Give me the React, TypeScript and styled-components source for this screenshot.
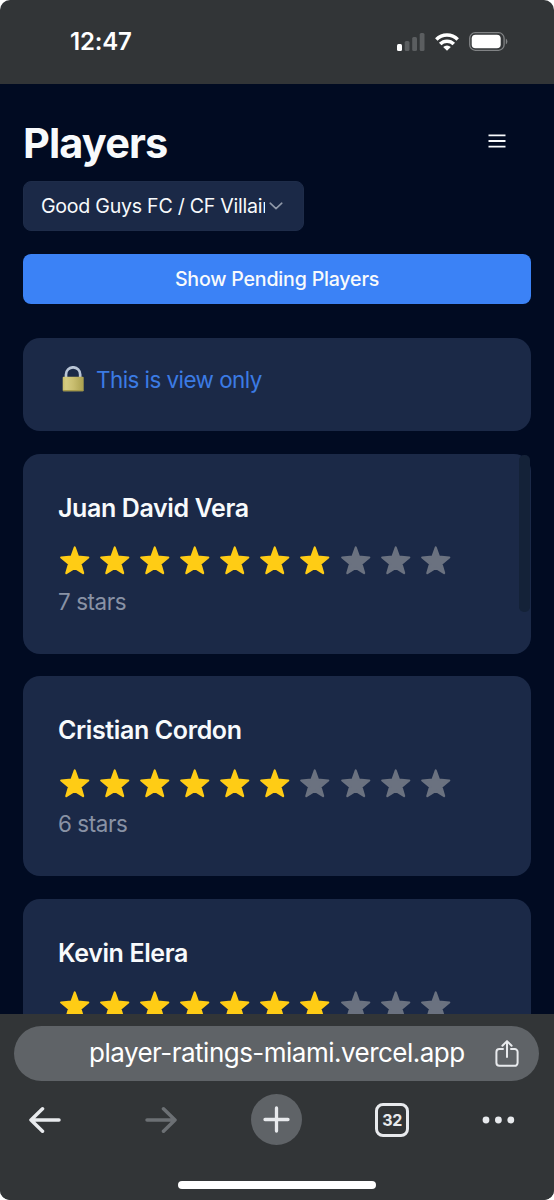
import React from "react";
import styled, { createGlobalStyle } from "styled-components";

const GlobalStyle = createGlobalStyle`
  * { box-sizing: border-box; }
  html, body { margin: 0; padding: 0; background: #fff; }
  body { font-family: Inter, "Liberation Sans", sans-serif; -webkit-font-smoothing: antialiased; }
  h1, h2, p { margin: 0; }
  button { font: inherit; border: 0; padding: 0; background: none; color: inherit; }
  svg { display: block; flex: none; }
`;

const Screen = styled.div`
  width: 554px;
  height: 1200px;
  display: flex;
  flex-direction: column;
  overflow: hidden;
  border-radius: 10px;
  background: #323537;
`;

const StatusBar = styled.header`
  height: 84px;
  flex: none;
  display: flex;
  justify-content: space-between;
  align-items: center;
  padding: 0 46px 1px 70px;
  color: #fff;
`;

const Clock = styled.span`
  font-size: 24px;
  font-weight: 600;
  line-height: 30px;
  letter-spacing: -0.2px;
`;

const StatusIcons = styled.div`
  display: flex;
  align-items: center;
  gap: 10px;
`;

const Page = styled.main`
  position: relative;
  flex: 1;
  min-height: 0;
  overflow: hidden;
  padding: 34px 23px 0;
  background: #010b22;
  color: #f8fafc;
`;

const TitleRow = styled.div`
  height: 50px;
  display: flex;
  justify-content: space-between;
  align-items: center;
`;

const Title = styled.h1`
  font-size: 41.5px;
  line-height: 50px;
  font-weight: 700;
  letter-spacing: -0.9px;
`;

const MenuButton = styled.button`
  width: 68px;
  height: 46px;
  padding-bottom: 4px;
  display: grid;
  place-items: center;
`;

const TeamSelect = styled.button`
  width: 281px;
  height: 50px;
  margin-top: 13px;
  padding: 0 20px 0 17px;
  display: flex;
  align-items: center;
  justify-content: space-between;
  border-radius: 8px;
  border: 1px solid #1e2c49;
  background: #1b2947;
  font-size: 19.6px;
  line-height: 28px;
`;

const TeamName = styled.span`
  width: 224px;
  flex: none;
  overflow: hidden;
  white-space: nowrap;
  text-align: left;
  letter-spacing: -0.26px;
`;

const PendingButton = styled.button`
  width: 100%;
  height: 50px;
  margin: 23px 0 34px;
  display: grid;
  place-items: center;
  border-radius: 8px;
  background: #3b82f6;
  font-size: 19.6px;
  font-weight: 500;
  letter-spacing: -0.2px;
`;

const CardList = styled.div`
  display: flex;
  flex-direction: column;
  gap: 22.6px;
`;

const Notice = styled.section`
  height: 93px;
  padding: 26px 38px;
  display: flex;
  align-items: flex-start;
  gap: 11px;
  border-radius: 17px;
  background: #1b2947;
  color: #3b7be4;
  font-size: 22.4px;
  line-height: 32px;
  letter-spacing: -0.53px;
`;

const PlayerCard = styled.article`
  height: 200px;
  padding: 37.3px 35px;
  border-radius: 17px;
  background: #1b2947;
`;

const PlayerName = styled.h2`
  font-size: 25px;
  line-height: 34px;
  font-weight: 600;
  letter-spacing: -0.38px;
`;

const Stars = styled.div`
  display: flex;
  gap: 8px;
  margin-top: 20.4px;
`;

const StarCount = styled.p`
  margin-top: 11.6px;
  font-size: 22.4px;
  line-height: 30px;
  letter-spacing: -0.42px;
  color: #8992a5;
`;

const Scrollbar = styled.div`
  position: absolute;
  top: 371px;
  right: 24px;
  width: 11px;
  height: 157px;
  border-radius: 5px;
  background: #142238;
`;

const BrowserBar = styled.footer`
  height: 186px;
  flex: none;
  padding: 12px 15px 0 14px;
  background: #323537;
  color: #e8eaed;
`;

const AddressBar = styled.div`
  height: 55px;
  padding: 0 20.5px 2px 75px;
  display: flex;
  align-items: center;
  justify-content: space-between;
  border-radius: 28px;
  background: #5f6367;
`;

const Address = styled.span`
  font-size: 26px;
  line-height: 36px;
  letter-spacing: -0.52px;
  white-space: nowrap;
  color: #fff;
`;

const Toolbar = styled.nav`
  height: 77px;
  display: grid;
  grid-template-columns: 61px 171px 61px 170px 42px;
`;

const ToolButton = styled.button<{ $muted?: boolean }>`
  display: grid;
  place-items: center;
  color: ${(p) => (p.$muted ? "#6c7074" : "#e8eaed")};
`;

const NewTab = styled.span`
  width: 51px;
  height: 51px;
  display: grid;
  place-items: center;
  border-radius: 50%;
  background: #5f6367;
`;

const TabCount = styled.span`
  width: 34px;
  height: 34px;
  display: grid;
  place-items: center;
  border: 3px solid #e8eaed;
  border-radius: 8px;
  font-size: 16px;
  line-height: 20px;
  font-weight: 700;
  letter-spacing: -0.5px;
`;

const HomeIndicator = styled.div`
  width: 198px;
  height: 8px;
  margin: 23px auto 0;
  border-radius: 4px;
  background: #fff;
`;

const Signal = () => (
  <svg width="28" height="18" viewBox="0 0 28 18" fill="#5b5e60">
    <rect x="0" y="11" width="5" height="7" rx="1.5" fill="#fff" />
    <rect x="7.7" y="8" width="4.8" height="10" rx="1.5" />
    <rect x="15.2" y="4" width="4.8" height="14" rx="1.5" />
    <rect x="22.7" y="0" width="4.8" height="18" rx="1.5" />
  </svg>
);

const Wifi = () => (
  <svg width="24" height="18" viewBox="0 0 24 18" fill="none" stroke="#fff" strokeWidth="3.5">
    <path d="M1.3 6.4a15.2 15.2 0 0 1 21.4 0" />
    <path d="M5.2 11a9.6 9.6 0 0 1 13.6 0" />
    <path d="M12 17.8l-3.8-3.7a5.4 5.4 0 0 1 7.6 0z" fill="#fff" stroke="none" />
  </svg>
);

const Battery = () => (
  <svg width="39" height="19" viewBox="0 0 39 19">
    <rect x="0.7" y="0.7" width="34.4" height="17.6" rx="5.6" fill="none" stroke="#818385" strokeWidth="1.3" />
    <rect x="2.7" y="2.7" width="29" height="13.6" rx="3.8" fill="#fff" />
    <path d="M36.8 6.6q1.6.8 1.6 2.9t-1.6 2.9z" fill="#818385" />
  </svg>
);

const MenuIcon = () => (
  <svg width="18" height="14" viewBox="0 0 18 14" stroke="#f8fafc" strokeWidth="1.9">
    <path d="M.5 1.4h17M.5 7h17M.5 12.6h17" />
  </svg>
);

const Chevron = () => (
  <svg width="14" height="8" viewBox="0 0 14 8" fill="none" stroke="#8f98a8" strokeWidth="1.6" strokeLinecap="round" strokeLinejoin="round">
    <path d="M1.2 1.2L7 6.7l5.8-5.5" />
  </svg>
);

const LockSvg = styled.svg`
  margin-top: 2px;
`;

const Lock = () => (
  <LockSvg width="24" height="26" viewBox="0 0 24 26">
    <defs>
      <linearGradient id="brass" x1="0" x2="1" y1="0" y2="0">
        <stop offset="0" stopColor="#c9bd69" />
        <stop offset=".15" stopColor="#d5cc82" />
        <stop offset=".5" stopColor="#c9be70" />
        <stop offset="1" stopColor="#aaa04f" />
      </linearGradient>
    </defs>
    <path d="M5 12V8.4a7.1 7.1 0 0 1 14.2 0V12" fill="none" stroke="#b9c5d6" strokeWidth="2.7" />
    <rect x="1.7" y="10.7" width="21" height="14.6" rx="1" fill="url(#brass)" />
    <path d="M2 24.6h20.4" stroke="#a49849" strokeWidth="1.2" />
  </LockSvg>
);

const Star = ({ on }: { on: boolean }) => {
  const color = on ? "#ffcc15" : "#6b7280";
  return (
    <svg width="32.08" height="30" viewBox="0 -0.5 32 30" fill={color} stroke={color} strokeWidth="2.2" strokeLinejoin="round">
      <path d="M16.7 2L19.9 11.1L30.2 12L22.4 18.3L25.1 27.6L16.7 22.4L8.3 27.6L11 18.3L3.2 12L13.5 11.1Z" />
    </svg>
  );
};

const Share = () => (
  <svg width="24" height="28" viewBox="0 0 24 28" fill="none" stroke="#e8eaed" strokeWidth="2" strokeLinecap="round" strokeLinejoin="round">
    <path d="M8 10H4.4a3 3 0 0 0-3 3v10.8a3 3 0 0 0 3 3h15.2a3 3 0 0 0 3-3V13a3 3 0 0 0-3-3H16" />
    <path d="M12 18V2.2M7.4 6.7L12 2.1L16.6 6.7" />
  </svg>
);

const Arrow = ({ forward }: { forward?: boolean }) => (
  <svg width="32" height="28" viewBox="0 0 32 28" fill="none" stroke="currentColor" strokeWidth="3.5" strokeLinecap="round" strokeLinejoin="round">
    {forward ? <path d="M2 14h28M18.5 2.8L30 14L18.5 25.2" /> : <path d="M30 14H2M13.5 2.8L2 14l11.5 11.2" />}
  </svg>
);

const Plus = () => (
  <svg width="27" height="27" viewBox="0 0 27 27" stroke="#e8eaed" strokeWidth="3.3" strokeLinecap="round">
    <path d="M13.5 2v23M2 13.5h23" />
  </svg>
);

const Dots = () => (
  <svg width="33" height="8" viewBox="0 0 33 8" fill="#e8eaed">
    <circle cx="4" cy="4" r="3.4" />
    <circle cx="16.4" cy="4" r="3.4" />
    <circle cx="28.8" cy="4" r="3.4" />
  </svg>
);

const players = [
  { name: "Juan David Vera", rating: 7, label: "7 stars" },
  { name: "Cristian Cordon", rating: 6, label: "6 stars" },
  { name: "Kevin Elera", rating: 7 },
];

export default function App() {
  return (
    <>
      <GlobalStyle />
      <Screen>
        <StatusBar>
          <Clock>12:47</Clock>
          <StatusIcons>
            <Signal />
            <Wifi />
            <Battery />
          </StatusIcons>
        </StatusBar>
        <Page>
          <TitleRow>
            <Title>Players</Title>
            <MenuButton aria-label="Menu">
              <MenuIcon />
            </MenuButton>
          </TitleRow>
          <TeamSelect>
            <TeamName>Good Guys FC / CF Villains</TeamName>
            <Chevron />
          </TeamSelect>
          <PendingButton>Show Pending Players</PendingButton>
          <CardList>
            <Notice>
              <Lock />
              <p>This is view only</p>
            </Notice>
            {players.map((player) => (
              <PlayerCard key={player.name}>
                <PlayerName>{player.name}</PlayerName>
                <Stars>
                  {Array.from({ length: 10 }, (_, i) => (
                    <Star key={i} on={i < player.rating} />
                  ))}
                </Stars>
                {player.label && <StarCount>{player.label}</StarCount>}
              </PlayerCard>
            ))}
          </CardList>
          <Scrollbar />
        </Page>
        <BrowserBar>
          <AddressBar>
            <Address>player-ratings-miami.vercel.app</Address>
            <Share />
          </AddressBar>
          <Toolbar>
            <ToolButton aria-label="Back">
              <Arrow />
            </ToolButton>
            <ToolButton aria-label="Forward" $muted>
              <Arrow forward />
            </ToolButton>
            <ToolButton aria-label="New tab">
              <NewTab>
                <Plus />
              </NewTab>
            </ToolButton>
            <ToolButton aria-label="Tabs">
              <TabCount>32</TabCount>
            </ToolButton>
            <ToolButton aria-label="More">
              <Dots />
            </ToolButton>
          </Toolbar>
          <HomeIndicator />
        </BrowserBar>
      </Screen>
    </>
  );
}
